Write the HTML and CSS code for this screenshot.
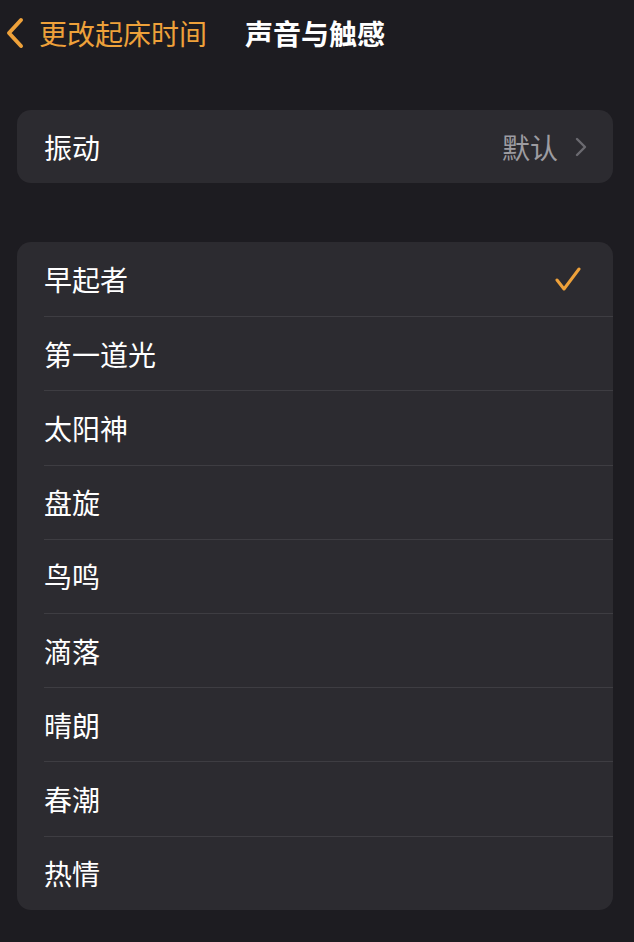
FILE: index.html
```html
<!DOCTYPE html>
<html lang="zh-CN">
  <head>
    <meta charset="utf-8">
    <meta name="viewport" content="width=device-width">
    <title>声音与触感</title>
    <link rel="stylesheet" href="styles.css">
  </head>
  <body>
    <!-- top bar -->
    <header class="navbar">
      <a class="back" href="#">
        <svg class="back-icon" viewBox="0 0 20 32" width="20" height="32">
          <path d="M16 3 L4 16 L16 29" fill="none" stroke="currentColor" stroke-width="4" stroke-linecap="round" stroke-linejoin="round"/>
        </svg>
        <span>更改起床时间</span>
      </a>
      <h1 class="title">声音与触感</h1>
      <span></span>
    </header>

    <!-- vibration -->
    <section class="card">
      <div class="row">
        <span class="label">振动</span>
        <span class="value">默认</span>
        <svg class="chevron" viewBox="0 0 12 20" width="12" height="20">
          <path d="M2 2 L10 10 L2 18" fill="none" stroke="currentColor" stroke-width="2.4" stroke-linecap="round" stroke-linejoin="round"/>
        </svg>
      </div>
    </section>

    <!-- alarm sounds -->
    <section class="card list">
      <div class="row">
        <span class="label">早起者</span>
        <svg class="check" viewBox="0 0 26 26" width="26" height="26">
          <path d="M2 14 L9 23 L24 3" fill="none" stroke="currentColor" stroke-width="3" stroke-linecap="round" stroke-linejoin="round"/>
        </svg>
      </div>
      <div class="row"><span class="label">第一道光</span></div>
      <div class="row"><span class="label">太阳神</span></div>
      <div class="row"><span class="label">盘旋</span></div>
      <div class="row"><span class="label">鸟鸣</span></div>
      <div class="row"><span class="label">滴落</span></div>
      <div class="row"><span class="label">晴朗</span></div>
      <div class="row"><span class="label">春潮</span></div>
      <div class="row"><span class="label">热情</span></div>
    </section>
  </body>
</html>
```

FILE: styles.css
```css
body {
  margin: 0;
  padding: 0 21px 0 17px;
  background: #1d1c21;
  color: #ffffff;
  font-family: "Noto Sans CJK SC", "Noto Sans", sans-serif;
  font-size: 28px;
}

/* top bar */
.navbar {
  height: 66px;
  margin: 0 -21px 0 -17px;
  display: grid;
  grid-template-columns: 1fr auto 1fr;
  align-items: center;
}

.back {
  display: flex;
  align-items: center;
  gap: 14px;
  padding-left: 5px;
  color: #eea13a;
  text-decoration: none;
  font-size: 28px;
}

.back-icon {
  display: block;
}

.title {
  margin: 0 0 0 -4px;
  font-size: 28px;
  font-weight: 700;
  color: #ffffff;
}

/* grouped cards */
.card {
  background: #2c2b30;
  border-radius: 14px;
  margin-top: 44px;
}

.card.list {
  margin-top: 59px;
}

.row {
  height: 73px;
  margin-left: 27px;
  padding-right: 26px;
  display: flex;
  align-items: center;
  gap: 17px;
}

.list .row {
  height: 74.2px;
  box-sizing: border-box;
  padding-right: 32px;
}

.list .row + .row {
  border-top: 1px solid #3e3d42;
}

.label {
  flex: 1;
  line-height: 1;
}

.value {
  color: #9d9ca1;
  line-height: 1;
}

.chevron {
  color: #6b6a70;
  display: block;
}

.check {
  color: #eea13a;
  display: block;
}
```
